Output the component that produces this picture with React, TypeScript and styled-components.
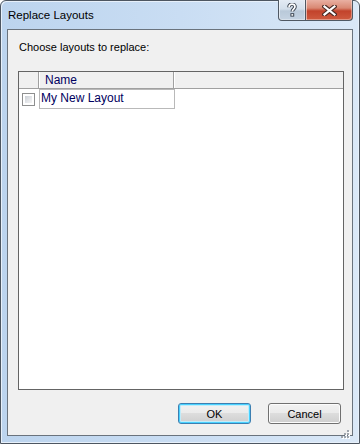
import { useState } from "react"
import styled, { createGlobalStyle } from "styled-components"

const GlobalStyle = createGlobalStyle`
  html, body {
    margin: 0;
    padding: 0;
    background: #ffffff;
  }
  * {
    box-sizing: border-box;
  }
`

const FONT = `"Liberation Sans", Arial, sans-serif`

const App = () => {
  const [checked, setChecked] = useState(false)
  return (
    <>
      <GlobalStyle />
      <StyledWindow>
        <StyledTitleBar>
          <StyledTitle>Replace Layouts</StyledTitle>
          <StyledControls>
            <StyledCaptionButton kind="help">
              <svg width="10" height="14" viewBox="0 0 10 14">
                <path
                  d="M2 4.2 C2 1.8 3.6 1.2 5 1.2 C6.8 1.2 8 2.2 8 3.8 C8 5.8 5.3 6 5.3 8.6"
                  fill="none"
                  stroke="#3b4450"
                  strokeWidth="3.6"
                />
                <rect x="3.4" y="10.2" width="3.8" height="3.4" fill="#3b4450" />
                <path
                  d="M2 4.2 C2 1.8 3.6 1.2 5 1.2 C6.8 1.2 8 2.2 8 3.8 C8 5.8 5.3 6 5.3 8.6"
                  fill="none"
                  stroke="#ffffff"
                  strokeWidth="1.7"
                />
                <rect x="4.4" y="11.1" width="1.8" height="1.6" fill="#ffffff" />
              </svg>
            </StyledCaptionButton>
            <StyledCaptionButton kind="close">
              <svg width="15" height="11" viewBox="0 0 15 11">
                <path
                  d="M2.5 1.5 L12.5 9.5 M12.5 1.5 L2.5 9.5"
                  stroke="#4a2a24"
                  strokeWidth="4.4"
                  strokeLinecap="square"
                />
                <path
                  d="M2.5 1.5 L12.5 9.5 M12.5 1.5 L2.5 9.5"
                  stroke="#ffffff"
                  strokeWidth="2.2"
                  strokeLinecap="square"
                />
              </svg>
            </StyledCaptionButton>
          </StyledControls>
        </StyledTitleBar>
        <StyledBody>
          <StyledLabel>Choose layouts to replace:</StyledLabel>
          <StyledList>
            <StyledHeader>
              <StyledHeaderCell width={20} />
              <StyledHeaderCell width={135}>Name</StyledHeaderCell>
              <StyledHeaderFill />
            </StyledHeader>
            <StyledRow>
              <StyledCheckCell>
                <StyledCheckbox
                  checked={checked}
                  onClick={() => setChecked(!checked)}
                />
              </StyledCheckCell>
              <StyledNameCell>My New Layout</StyledNameCell>
            </StyledRow>
          </StyledList>
          <StyledButtons>
            <StyledButton isDefault>OK</StyledButton>
            <StyledButton>Cancel</StyledButton>
          </StyledButtons>
        </StyledBody>
        <StyledGrip>
          <svg width="10" height="10" viewBox="0 0 10 10">
            {[
              [7, 1],
              [4, 4],
              [7, 4],
              [1, 7],
              [4, 7],
              [7, 7],
            ].map(([x, y]) => (
              <g key={`${x}-${y}`}>
                <rect x={x + 1} y={y + 1} width="2" height="2" fill="#ffffff" />
                <rect x={x} y={y} width="2" height="2" fill="#a0a6ad" />
              </g>
            ))}
          </svg>
        </StyledGrip>
      </StyledWindow>
    </>
  )
}

export default App

const StyledWindow = styled.div`
  position: relative;
  width: 360px;
  height: 444px;
  display: flex;
  flex-direction: column;
  border: 1px solid #4d5661;
  border-radius: 6px 6px 0 0;
  background: linear-gradient(90deg, #bcd4ee 0%, #c9ddf3 50%, #dae8f7 100%);
  box-shadow: inset 1px 1px 0 #e7f0fa, inset -1px -1px 0 #e7f0fa;
  font-family: ${FONT};
`

const StyledTitleBar = styled.div`
  height: 28px;
  display: flex;
  align-items: flex-start;
  justify-content: space-between;
  padding-left: 7px;
`

const StyledTitle = styled.div`
  margin-top: 7px;
  font-size: 11.5px;
  line-height: 15px;
  color: #000000;
`

const StyledControls = styled.div`
  display: flex;
  margin-top: -1px;
  margin-right: 6px;
`

const StyledCaptionButton = styled.div<{ kind: "help" | "close" }>`
  width: ${(props) => (props.kind === "help" ? "28px" : "47px")};
  height: 21px;
  display: flex;
  align-items: center;
  justify-content: center;
  border: 1px solid #4f5863;
  border-top: none;
  border-left: ${(props) =>
    props.kind === "help" ? "1px solid #4f5863" : "none"};
  border-radius: ${(props) =>
    props.kind === "help" ? "0 0 0 4px" : "0 0 4px 0"};
  background: ${(props) =>
    props.kind === "help"
      ? "linear-gradient(180deg, #e3ebf4 0%, #d3dfeb 45%, #b9c9d9 55%, #c5d3e2 100%)"
      : "linear-gradient(180deg, #e9b0a2 0%, #d98873 40%, #c2432b 55%, #cf5a3f 100%)"};
  box-shadow: inset 1px 0 0 rgba(255, 255, 255, 0.55),
    inset -1px -1px 0 rgba(255, 255, 255, 0.35);
`

const StyledBody = styled.div`
  flex: 1;
  display: flex;
  flex-direction: column;
  margin: 0 6px 7px 6px;
  padding: 10px 8px 11px 10px;
  border: 1px solid #6a737d;
  background: #f0f0f0;
`

const StyledLabel = styled.div`
  margin-left: 1px;
  font-size: 11px;
  line-height: 15px;
  color: #000000;
`

const StyledList = styled.div`
  flex: 1;
  margin-top: 16px;
  display: flex;
  flex-direction: column;
  border: 1px solid #646464;
  background: #ffffff;
`

const StyledHeader = styled.div`
  height: 17px;
  display: flex;
  background: #f0f0f0;
  border-bottom: 1px solid #a0a0a0;
`

const StyledHeaderCell = styled.div<{ width: number }>`
  width: ${(props) => props.width}px;
  padding-left: 6px;
  font-size: 12px;
  line-height: 16px;
  color: #000060;
  border-right: 1px solid #a0a0a0;
  box-shadow: 1px 0 0 #ffffff;
`

const StyledHeaderFill = styled.div`
  flex: 1;
`

const StyledRow = styled.div`
  height: 20px;
  display: flex;
`

const StyledCheckCell = styled.div`
  width: 20px;
  display: flex;
  align-items: center;
  padding-left: 3px;
`

const StyledCheckbox = styled.div<{ checked: boolean }>`
  width: 13px;
  height: 13px;
  border: 1px solid #8e8f8f;
  background: #ffffff;
  padding: 2px;
  &::after {
    content: "";
    display: block;
    width: 7px;
    height: 7px;
    background: ${(props) =>
      props.checked
        ? "#333333"
        : "linear-gradient(135deg, #cbcfd5 0%, #e6e8eb 60%, #f4f4f4 100%)"};
  }
`

const StyledNameCell = styled.div`
  width: 136px;
  height: 20px;
  padding-left: 1px;
  border: 1px solid #b9b9b9;
  font-size: 12px;
  line-height: 17px;
  color: #000060;
`

const StyledButtons = styled.div`
  display: flex;
  justify-content: flex-end;
  gap: 17px;
  margin-top: 13px;
  padding-right: 3px;
`

const StyledButton = styled.div<{ isDefault?: boolean }>`
  width: 73px;
  height: 21px;
  display: flex;
  align-items: center;
  justify-content: center;
  border: 1px solid ${(props) => (props.isDefault ? "#3c7fb1" : "#707070")};
  border-radius: 3px;
  background: linear-gradient(
    180deg,
    #f2f2f2 0%,
    #ebebeb 45%,
    #dddddd 50%,
    #cfcfcf 100%
  );
  box-shadow: ${(props) =>
    props.isDefault
      ? "inset 0 0 0 1px #48d1ff, inset 0 0 0 2px #c0ecfa"
      : "inset 0 0 0 1px #fcfcfc"};
  font-size: 11px;
  color: #000000;
`

const StyledGrip = styled.div`
  position: absolute;
  right: 9px;
  bottom: 8px;
  width: 10px;
  height: 10px;
`
